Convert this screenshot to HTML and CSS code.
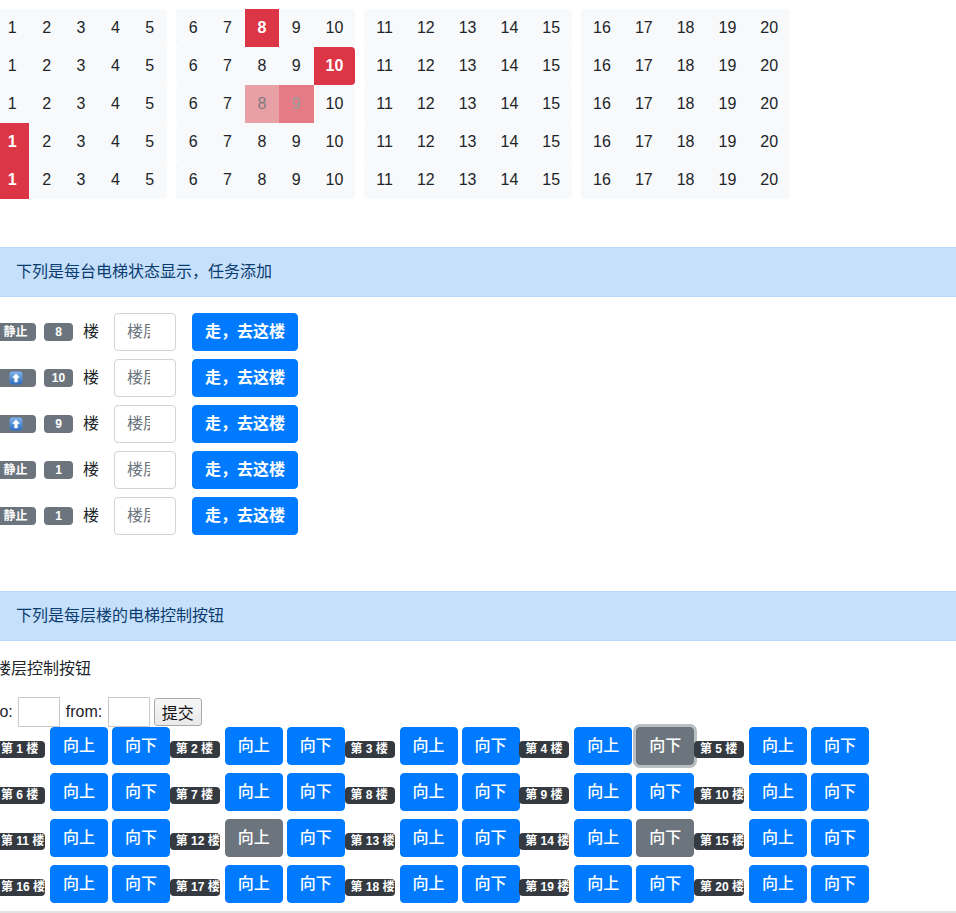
FILE: index.html
```html
<!DOCTYPE html>
<html lang="zh">
<head>
<meta charset="utf-8">
<title>电梯调度</title>
<link rel="stylesheet" href="styles.css">
</head>
<body>
<div class="page">
  <div class="grid">
    <div class="grid-row">
      <div class="group"><span class="cell">1</span><span class="cell">2</span><span class="cell">3</span><span class="cell">4</span><span class="cell">5</span></div>
      <div class="group"><span class="cell">6</span><span class="cell">7</span><span class="cell active">8</span><span class="cell">9</span><span class="cell">10</span></div>
      <div class="group"><span class="cell">11</span><span class="cell">12</span><span class="cell">13</span><span class="cell">14</span><span class="cell">15</span></div>
      <div class="group"><span class="cell">16</span><span class="cell">17</span><span class="cell">18</span><span class="cell">19</span><span class="cell">20</span></div>
    </div>
    <div class="grid-row">
      <div class="group"><span class="cell">1</span><span class="cell">2</span><span class="cell">3</span><span class="cell">4</span><span class="cell">5</span></div>
      <div class="group"><span class="cell">6</span><span class="cell">7</span><span class="cell">8</span><span class="cell">9</span><span class="cell active">10</span></div>
      <div class="group"><span class="cell">11</span><span class="cell">12</span><span class="cell">13</span><span class="cell">14</span><span class="cell">15</span></div>
      <div class="group"><span class="cell">16</span><span class="cell">17</span><span class="cell">18</span><span class="cell">19</span><span class="cell">20</span></div>
    </div>
    <div class="grid-row">
      <div class="group"><span class="cell">1</span><span class="cell">2</span><span class="cell">3</span><span class="cell">4</span><span class="cell">5</span></div>
      <div class="group"><span class="cell">6</span><span class="cell">7</span><span class="cell pending-light">8</span><span class="cell pending">9</span><span class="cell">10</span></div>
      <div class="group"><span class="cell">11</span><span class="cell">12</span><span class="cell">13</span><span class="cell">14</span><span class="cell">15</span></div>
      <div class="group"><span class="cell">16</span><span class="cell">17</span><span class="cell">18</span><span class="cell">19</span><span class="cell">20</span></div>
    </div>
    <div class="grid-row">
      <div class="group"><span class="cell active">1</span><span class="cell">2</span><span class="cell">3</span><span class="cell">4</span><span class="cell">5</span></div>
      <div class="group"><span class="cell">6</span><span class="cell">7</span><span class="cell">8</span><span class="cell">9</span><span class="cell">10</span></div>
      <div class="group"><span class="cell">11</span><span class="cell">12</span><span class="cell">13</span><span class="cell">14</span><span class="cell">15</span></div>
      <div class="group"><span class="cell">16</span><span class="cell">17</span><span class="cell">18</span><span class="cell">19</span><span class="cell">20</span></div>
    </div>
    <div class="grid-row">
      <div class="group"><span class="cell active">1</span><span class="cell">2</span><span class="cell">3</span><span class="cell">4</span><span class="cell">5</span></div>
      <div class="group"><span class="cell">6</span><span class="cell">7</span><span class="cell">8</span><span class="cell">9</span><span class="cell">10</span></div>
      <div class="group"><span class="cell">11</span><span class="cell">12</span><span class="cell">13</span><span class="cell">14</span><span class="cell">15</span></div>
      <div class="group"><span class="cell">16</span><span class="cell">17</span><span class="cell">18</span><span class="cell">19</span><span class="cell">20</span></div>
    </div>
  </div>

  <div class="alert alert-first">下列是每台电梯状态显示，任务添加</div>

  <div class="lifts">
    <div class="lift">
      <span class="badge state">静止</span><span class="badge num">8</span><span class="floor-label">楼</span><input class="floor-input" type="text" placeholder="楼层"><button class="go">走，去这楼</button>
    </div>
    <div class="lift">
      <span class="badge state"><svg class="arrow-emoji" viewBox="0 0 13 13" width="14" height="14"><defs><linearGradient id="eg1" x1="0" y1="0" x2="0" y2="1"><stop offset="0" stop-color="#7fb3ef"/><stop offset="1" stop-color="#2d6cc0"/></linearGradient></defs><rect x="0.5" y="0.5" width="12" height="12" rx="2.5" fill="url(#eg1)"/><path d="M6.5 2.3 L10.2 6.3 H8 V10.4 H5 V6.3 H2.8 Z" fill="#fff"/></svg></span><span class="badge num">10</span><span class="floor-label">楼</span><input class="floor-input" type="text" placeholder="楼层"><button class="go">走，去这楼</button>
    </div>
    <div class="lift">
      <span class="badge state"><svg class="arrow-emoji" viewBox="0 0 13 13" width="14" height="14"><defs><linearGradient id="eg2" x1="0" y1="0" x2="0" y2="1"><stop offset="0" stop-color="#7fb3ef"/><stop offset="1" stop-color="#2d6cc0"/></linearGradient></defs><rect x="0.5" y="0.5" width="12" height="12" rx="2.5" fill="url(#eg2)"/><path d="M6.5 2.3 L10.2 6.3 H8 V10.4 H5 V6.3 H2.8 Z" fill="#fff"/></svg></span><span class="badge num">9</span><span class="floor-label">楼</span><input class="floor-input" type="text" placeholder="楼层"><button class="go">走，去这楼</button>
    </div>
    <div class="lift">
      <span class="badge state">静止</span><span class="badge num">1</span><span class="floor-label">楼</span><input class="floor-input" type="text" placeholder="楼层"><button class="go">走，去这楼</button>
    </div>
    <div class="lift">
      <span class="badge state">静止</span><span class="badge num">1</span><span class="floor-label">楼</span><input class="floor-input" type="text" placeholder="楼层"><button class="go">走，去这楼</button>
    </div>
  </div>

  <div class="alert alert-second">下列是每层楼的电梯控制按钮</div>

  <div class="section-title">楼层控制按钮</div>

  <div class="call-form">
    <span>to:</span><input class="plain-input" type="text"><span>from:</span><input class="plain-input" type="text"><button class="submit">提交</button>
  </div>

  <div class="floors">
    <div class="floor"><span class="floor-badge">第 1 楼</span><button class="call">向上</button><button class="call">向下</button></div>
    <div class="floor"><span class="floor-badge">第 2 楼</span><button class="call">向上</button><button class="call">向下</button></div>
    <div class="floor"><span class="floor-badge">第 3 楼</span><button class="call">向上</button><button class="call">向下</button></div>
    <div class="floor"><span class="floor-badge">第 4 楼</span><button class="call">向上</button><button class="call pressed focused">向下</button></div>
    <div class="floor"><span class="floor-badge">第 5 楼</span><button class="call">向上</button><button class="call">向下</button></div>
    <div class="floor"><span class="floor-badge">第 6 楼</span><button class="call">向上</button><button class="call">向下</button></div>
    <div class="floor"><span class="floor-badge">第 7 楼</span><button class="call">向上</button><button class="call">向下</button></div>
    <div class="floor"><span class="floor-badge">第 8 楼</span><button class="call">向上</button><button class="call">向下</button></div>
    <div class="floor"><span class="floor-badge">第 9 楼</span><button class="call">向上</button><button class="call">向下</button></div>
    <div class="floor"><span class="floor-badge">第 10 楼</span><button class="call">向上</button><button class="call">向下</button></div>
    <div class="floor"><span class="floor-badge">第 11 楼</span><button class="call">向上</button><button class="call">向下</button></div>
    <div class="floor"><span class="floor-badge">第 12 楼</span><button class="call pressed">向上</button><button class="call">向下</button></div>
    <div class="floor"><span class="floor-badge">第 13 楼</span><button class="call">向上</button><button class="call">向下</button></div>
    <div class="floor"><span class="floor-badge">第 14 楼</span><button class="call">向上</button><button class="call pressed">向下</button></div>
    <div class="floor"><span class="floor-badge">第 15 楼</span><button class="call">向上</button><button class="call">向下</button></div>
    <div class="floor"><span class="floor-badge">第 16 楼</span><button class="call">向上</button><button class="call">向下</button></div>
    <div class="floor"><span class="floor-badge">第 17 楼</span><button class="call">向上</button><button class="call">向下</button></div>
    <div class="floor"><span class="floor-badge">第 18 楼</span><button class="call">向上</button><button class="call">向下</button></div>
    <div class="floor"><span class="floor-badge">第 19 楼</span><button class="call">向上</button><button class="call">向下</button></div>
    <div class="floor"><span class="floor-badge">第 20 楼</span><button class="call">向上</button><button class="call">向下</button></div>
  </div>

  <hr class="divider">
</div>
</body>
</html>
```

FILE: styles.css
```css
html, body {
  margin: 0;
  padding: 0;
  background: #fff;
  overflow: hidden;
}

body {
  font-family: "Liberation Sans", "Noto Sans CJK SC", sans-serif;
  font-size: 16px;
  line-height: 24px;
  color: #212529;
}

.page {
  margin: 0 -5px;
  padding-top: 9px;
}

/* top status grid */
.grid {
  display: flex;
  flex-direction: column;
}

.grid-row {
  display: flex;
  gap: 9px;
}

.group {
  display: flex;
  background: #f8f9fa;
  border-radius: 4px;
  overflow: hidden;
}

.cell {
  box-sizing: border-box;
  min-width: 34.4px;
  padding: 7px 12px;
  text-align: center;
  line-height: 24px;
  color: #212529;
}

.cell.active {
  background: #dc3545;
  color: #fff;
  font-weight: 700;
}

.cell.pending-light {
  background: #e99fa6;
  color: #7d7d7d;
}

.cell.pending {
  background: #e47b85;
  color: #9c9c9c;
}

/* alerts */
.alert {
  box-sizing: border-box;
  padding: 12px 20px;
  background: #c6e0fc;
  border: 1px solid #b6d6fb;
  color: #0b3c6f;
  line-height: 24px;
}

.alert-first {
  margin-top: 48px;
}

.alert-second {
  margin-top: 56px;
}

/* elevator rows */
.lifts {
  display: flex;
  flex-direction: column;
  gap: 8px;
  margin-top: 16px;
}

.lift {
  display: flex;
  align-items: center;
}

.badge {
  box-sizing: border-box;
  display: inline-flex;
  align-items: center;
  justify-content: center;
  height: 18px;
  background: #6c757d;
  color: #fff;
  border-radius: 4px;
  font-size: 12px;
  font-weight: 700;
  line-height: 1;
}

.badge.state {
  width: 41px;
  margin-right: 8px;
}

.badge.num {
  width: 29px;
  margin-right: 10px;
}

.arrow-emoji {
  display: block;
}

.floor-label {
  margin-right: 15px;
}

.floor-input {
  box-sizing: border-box;
  width: 62px;
  height: 38px;
  padding: 6px 25px 6px 12px;
  border: 1px solid #ced4da;
  border-radius: 4px;
  font-family: inherit;
  font-size: 16px;
  color: #495057;
  margin-right: 16px;
}

.floor-input::placeholder {
  color: #6c757d;
}

.go {
  box-sizing: border-box;
  height: 38px;
  padding: 6px 12px;
  border: 1px solid #007bff;
  border-radius: 4px;
  background: #007bff;
  color: #fff;
  font-family: inherit;
  font-size: 16px;
  font-weight: 700;
  line-height: 24px;
}

/* floor controls */
.section-title {
  margin-top: 16px;
  line-height: 24px;
}

.call-form {
  display: flex;
  align-items: center;
  gap: 5.5px;
  margin-top: 16px;
  height: 30px;
}

.plain-input {
  box-sizing: border-box;
  width: 42px;
  height: 30px;
  border: 1px solid #c9c9c9;
  border-radius: 0;
  padding: 2px;
  font-size: 16px;
}

.submit {
  box-sizing: border-box;
  height: 28px;
  width: 48px;
  margin-left: -1.5px;
  padding: 0;
  border: 1px solid #a9a9a9;
  border-radius: 3px;
  background: linear-gradient(#f6f6f6, #e9e9e9);
  font-family: inherit;
  font-size: 16px;
  color: #111;
}

.floors {
  display: flex;
  flex-wrap: wrap;
  row-gap: 8px;
}

.floor {
  display: flex;
  align-items: flex-end;
  width: 174.75px;
}

.floor-badge {
  flex: none;
  box-sizing: border-box;
  width: 50px;
  height: 17px;
  margin-bottom: 7px;
  margin-right: 5px;
  padding-left: 6px;
  background: #343a40;
  color: #fff;
  border-radius: 4px;
  font-size: 12px;
  font-weight: 700;
  line-height: 17px;
  white-space: nowrap;
  overflow: hidden;
}

.call {
  flex: none;
  box-sizing: border-box;
  width: 58px;
  height: 38px;
  padding: 6px 0;
  border: 1px solid #007bff;
  border-radius: 4px;
  background: #007bff;
  color: #fff;
  font-family: inherit;
  font-size: 16px;
  font-weight: 500;
  line-height: 24px;
  white-space: nowrap;
}

.call + .call {
  margin-left: 4px;
}

.call.pressed {
  background: #6c757d;
  border-color: #6c757d;
}

.call.focused {
  box-shadow: 0 0 0 3px rgba(130, 138, 145, 0.55);
}

.divider {
  margin: 8px 0 0;
  border: 0;
  border-top: 2px solid #e2e2e2;
}
```
